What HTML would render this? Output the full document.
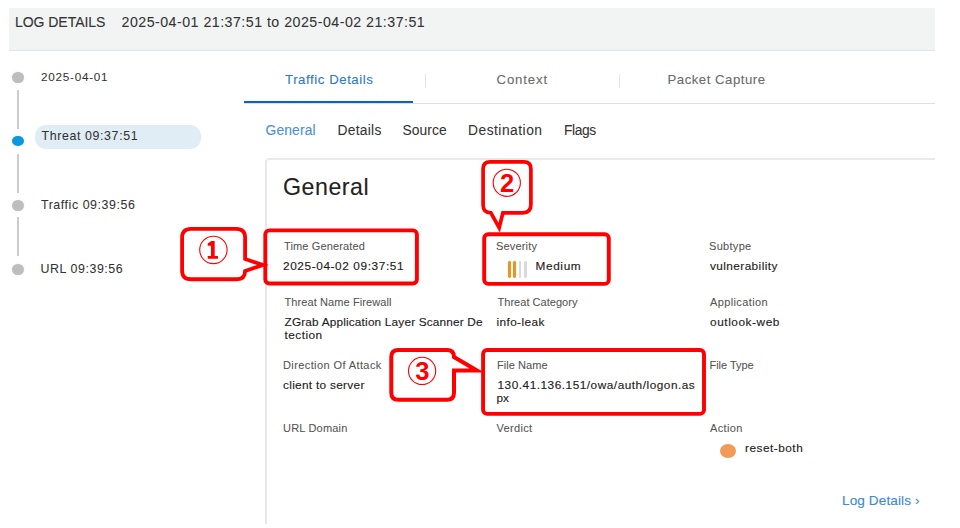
<!DOCTYPE html>
<html><head><meta charset="utf-8">
<style>
html,body{margin:0;padding:0;background:#fff;width:960px;height:528px;overflow:hidden;position:relative;font-family:"Liberation Sans",sans-serif;}
.t{position:absolute;white-space:pre;line-height:normal;}
.a{position:absolute;}
</style></head><body>
<!-- header -->
<div class="a" style="left:9px;top:8px;width:926px;height:42px;background:#f2f4f4;border-bottom:1px solid #e2e4e7;"></div>
<!-- timeline -->
<div class="a" style="left:12.1px;top:71.8px;width:11.7px;height:11.7px;border-radius:50%;background:#bdbdbd;box-shadow:0 0 3px rgba(0,0,0,0.08);"></div>
<div class="a" style="left:17px;top:89.7px;width:2px;height:39px;background:#cccccc;"></div>
<div class="a" style="left:12px;top:135.5px;width:12px;height:10.6px;border-radius:50%;background:#0b98dc;box-shadow:0 0 3px rgba(0,0,0,0.08);"></div>
<div class="a" style="left:35px;top:125px;width:166px;height:24.2px;border-radius:11px;background:#e0edf5;"></div>
<div class="a" style="left:17px;top:154px;width:2px;height:38.6px;background:#cccccc;"></div>
<div class="a" style="left:12.2px;top:199.8px;width:11.6px;height:11px;border-radius:50%;background:#bdbdbd;box-shadow:0 0 3px rgba(0,0,0,0.08);"></div>
<div class="a" style="left:17px;top:217.2px;width:2px;height:38.5px;background:#cccccc;"></div>
<div class="a" style="left:12.1px;top:263.9px;width:11.65px;height:11.1px;border-radius:50%;background:#bdbdbd;box-shadow:0 0 3px rgba(0,0,0,0.08);"></div>
<!-- tabs -->
<div class="a" style="left:244px;top:102.5px;width:691px;height:1.5px;background:#e0e0e0;"></div>
<div class="a" style="left:244px;top:100.9px;width:169px;height:2.4px;background:#0564c8;"></div>
<div class="a" style="left:425px;top:74px;width:1px;height:14px;background:#e6e6e6;"></div>
<div class="a" style="left:619px;top:74px;width:1px;height:14px;background:#e6e6e6;"></div>
<!-- card -->
<div class="a" style="left:265px;top:158px;width:668px;height:364px;border-top:2px solid #eaeaea;border-left:2px solid #e8e8e8;border-top-left-radius:4px;"></div>
<!-- severity bars -->
<div class="a" style="left:508px;top:261.2px;width:2.8px;height:16.4px;border-radius:1.4px;background:#f0921e;"></div>
<div class="a" style="left:513.1px;top:261.2px;width:2.8px;height:16.4px;border-radius:1.4px;background:#f0921e;"></div>
<div class="a" style="left:518.6px;top:261.2px;width:2.8px;height:16.4px;border-radius:1.4px;background:#dadada;"></div>
<div class="a" style="left:523.9px;top:261.2px;width:2.8px;height:16.4px;border-radius:1.4px;background:#dadada;"></div>
<!-- action dot -->
<div class="a" style="left:719.9px;top:443.7px;width:16.3px;height:14.1px;border-radius:50%;background:#f29a56;"></div>
<!-- annotations -->
<svg class="a" style="left:0;top:0" width="960" height="528" viewBox="0 0 960 528">
<g fill="none" stroke="#ff0000" stroke-width="4" stroke-linejoin="miter" stroke-miterlimit="10">
<rect x="265.3" y="230.35" width="151.6" height="53.15" rx="4" stroke-width="3.9"/>
<rect x="484.2" y="234.2" width="124.6" height="49.7" rx="4" stroke-width="3.9"/>
<rect x="483.1" y="349.95" width="220.9" height="63.95" rx="4" stroke-width="3.9"/>
<path d="M191 228.9 H236.3 Q245.1 228.9 245.1 237.7 V259 L263 265 L245.1 271 Q245.1 279.25 236.8 279.25 H190.9 Q182.1 279.25 182.1 270.45 V237.7 Q182.1 228.9 190.9 228.9 Z" stroke-width="3.8"/>
<path d="M490.1 161.9 H523.9 Q530.9 161.9 530.9 168.9 V204.8 Q530.9 212.8 522.9 212.8 H502.9 L499.2 227.8 L490.9 212.8 Q483.1 212.8 483.1 205 V168.9 Q483.1 161.9 490.1 161.9 Z" stroke-width="3.7"/>
<path d="M398.3 350.1 H447 Q454 350.1 454 357 L477 370.6 L454 370.6 V392.7 Q454 399.7 447 399.7 H398.3 Q391.3 399.7 391.3 392.7 V357.1 Q391.3 350.1 398.3 350.1 Z"/>
</g>
<g fill="none" stroke="#ff0000" stroke-width="1.1">
<circle cx="213.4" cy="249.9" r="13.7"/>
<circle cx="506.8" cy="182.8" r="13.6"/>
<circle cx="422.1" cy="370.9" r="13.6"/>
</g>
<g fill="#ff0000" font-weight="bold">
<path d="M207.7 243.4 L211.3 241 H214.7 V256.1 H218 V258.8 H207.7 V256.1 H211 V245.7 H207.7 Z" stroke="none"/>
<text x="507" y="192" font-family="Liberation Sans" font-size="25.5" text-anchor="middle">2</text>
<text x="422.3" y="380.1" font-family="Liberation Sans" font-size="25.5" text-anchor="middle">3</text>
</g>
</svg>

<div class="t" id="t0" style="left:15.00px;top:13.60px;font-size:14.0px;letter-spacing:-0.040px;color:#333;-webkit-text-stroke:0.12px #333">LOG DETAILS</div>
<div class="t" id="t1" style="left:121.50px;top:13.80px;font-size:14.2px;letter-spacing:0.488px;color:#333;-webkit-text-stroke:0.06px #333">2025-04-01 21:37:51 to 2025-04-02 21:37:51</div>
<div class="t" id="t2" style="left:41.00px;top:70.30px;font-size:11.7px;letter-spacing:0.756px;color:#333;-webkit-text-stroke:0.06px #333">2025-04-01</div>
<div class="t" id="t3" style="left:41.50px;top:129.00px;font-size:12.4px;letter-spacing:0.614px;color:#333;-webkit-text-stroke:0.06px #333">Threat 09:37:51</div>
<div class="t" id="t4" style="left:41.00px;top:197.90px;font-size:12.4px;letter-spacing:0.560px;color:#333;-webkit-text-stroke:0.06px #333">Traffic 09:39:56</div>
<div class="t" id="t5" style="left:40.50px;top:261.70px;font-size:12.4px;letter-spacing:0.564px;color:#333;-webkit-text-stroke:0.06px #333">URL 09:39:56</div>
<div class="t" id="t6" style="left:285.00px;top:71.90px;font-size:13.2px;letter-spacing:0.571px;color:#2a7bc4;-webkit-text-stroke:0.1px #2a7bc4">Traffic Details</div>
<div class="t" id="t7" style="left:496.50px;top:71.90px;font-size:13.2px;letter-spacing:0.867px;color:#6b6b6b;-webkit-text-stroke:0.1px #6b6b6b">Context</div>
<div class="t" id="t8" style="left:667.50px;top:72.00px;font-size:13.2px;letter-spacing:0.508px;color:#6b6b6b;-webkit-text-stroke:0.1px #6b6b6b">Packet Capture</div>
<div class="t" id="t9" style="left:265.50px;top:122.50px;font-size:13.8px;letter-spacing:0.167px;color:#4a90d6;-webkit-text-stroke:0.1px #4a90d6">General</div>
<div class="t" id="t10" style="left:337.50px;top:122.50px;font-size:13.8px;letter-spacing:0.267px;color:#333;-webkit-text-stroke:0.06px #333">Details</div>
<div class="t" id="t11" style="left:402.50px;top:122.50px;font-size:13.8px;letter-spacing:0.080px;color:#333;-webkit-text-stroke:0.06px #333">Source</div>
<div class="t" id="t12" style="left:468.00px;top:122.50px;font-size:13.8px;letter-spacing:0.500px;color:#333;-webkit-text-stroke:0.06px #333">Destination</div>
<div class="t" id="t13" style="left:564.00px;top:122.50px;font-size:13.8px;letter-spacing:-0.400px;color:#333;-webkit-text-stroke:0.06px #333">Flags</div>
<div class="t" id="t14" style="left:283.00px;top:174.00px;font-size:23.2px;letter-spacing:0.533px;color:#222;-webkit-text-stroke:0.1px #222">General</div>
<div class="t" id="t15" style="left:284.00px;top:239.90px;font-size:11.0px;letter-spacing:0.138px;color:#555;-webkit-text-stroke:0.08px #555">Time Generated</div>
<div class="t" id="t16" style="left:496.00px;top:239.80px;font-size:11.0px;letter-spacing:0.171px;color:#555;-webkit-text-stroke:0.08px #555">Severity</div>
<div class="t" id="t17" style="left:709.00px;top:240.00px;font-size:11.0px;letter-spacing:0.300px;color:#555;-webkit-text-stroke:0.08px #555">Subtype</div>
<div class="t" id="t18" style="left:284.50px;top:295.60px;font-size:11.0px;letter-spacing:0.095px;color:#555;-webkit-text-stroke:0.08px #555">Threat Name Firewall</div>
<div class="t" id="t19" style="left:497.50px;top:295.70px;font-size:11.0px;letter-spacing:0.029px;color:#555;-webkit-text-stroke:0.08px #555">Threat Category</div>
<div class="t" id="t20" style="left:710.00px;top:295.70px;font-size:11.0px;letter-spacing:0.380px;color:#555;-webkit-text-stroke:0.08px #555">Application</div>
<div class="t" id="t21" style="left:283.00px;top:359.20px;font-size:11.0px;letter-spacing:0.400px;color:#555;-webkit-text-stroke:0.08px #555">Direction Of Attack</div>
<div class="t" id="t22" style="left:497.00px;top:359.10px;font-size:11.0px;letter-spacing:0.050px;color:#555;-webkit-text-stroke:0.08px #555">File Name</div>
<div class="t" id="t23" style="left:709.50px;top:358.80px;font-size:11.0px;letter-spacing:-0.025px;color:#555;-webkit-text-stroke:0.08px #555">File Type</div>
<div class="t" id="t24" style="left:283.00px;top:422.30px;font-size:11.0px;letter-spacing:0.200px;color:#555;-webkit-text-stroke:0.08px #555">URL Domain</div>
<div class="t" id="t25" style="left:496.50px;top:422.20px;font-size:11.0px;letter-spacing:0.333px;color:#555;-webkit-text-stroke:0.08px #555">Verdict</div>
<div class="t" id="t26" style="left:710.00px;top:422.10px;font-size:11.0px;letter-spacing:0.360px;color:#555;-webkit-text-stroke:0.08px #555">Action</div>
<div class="t" id="t27" style="left:283.00px;top:258.80px;font-size:11.8px;letter-spacing:0.611px;color:#1e1e1e;-webkit-text-stroke:0.15px #1e1e1e">2025-04-02 09:37:51</div>
<div class="t" id="t28" style="left:535.50px;top:258.70px;font-size:11.8px;letter-spacing:0.640px;color:#1e1e1e;-webkit-text-stroke:0.15px #1e1e1e">Medium</div>
<div class="t" id="t29" style="left:710.00px;top:258.80px;font-size:11.8px;letter-spacing:0.417px;color:#1e1e1e;-webkit-text-stroke:0.15px #1e1e1e">vulnerability</div>
<div class="t" id="t30" style="left:284.50px;top:314.90px;font-size:11.8px;letter-spacing:0.182px;color:#1e1e1e;-webkit-text-stroke:0.15px #1e1e1e">ZGrab Application Layer Scanner De</div>
<div class="t" id="t31" style="left:284.50px;top:327.60px;font-size:11.8px;letter-spacing:0.467px;color:#1e1e1e;-webkit-text-stroke:0.15px #1e1e1e">tection</div>
<div class="t" id="t32" style="left:496.50px;top:314.50px;font-size:11.8px;letter-spacing:0.400px;color:#1e1e1e;-webkit-text-stroke:0.15px #1e1e1e">info-leak</div>
<div class="t" id="t33" style="left:710.00px;top:314.50px;font-size:11.8px;letter-spacing:0.580px;color:#1e1e1e;-webkit-text-stroke:0.15px #1e1e1e">outlook-web</div>
<div class="t" id="t34" style="left:283.00px;top:378.00px;font-size:11.8px;letter-spacing:0.307px;color:#1e1e1e;-webkit-text-stroke:0.15px #1e1e1e">client to server</div>
<div class="t" id="t35" style="left:497.50px;top:377.80px;font-size:11.8px;letter-spacing:0.523px;color:#1e1e1e;-webkit-text-stroke:0.15px #1e1e1e">130.41.136.151/owa/auth/logon.as</div>
<div class="t" id="t36" style="left:496.50px;top:390.90px;font-size:11.8px;letter-spacing:0.000px;color:#1e1e1e;-webkit-text-stroke:0.15px #1e1e1e">px</div>
<div class="t" id="t37" style="left:745.00px;top:440.50px;font-size:11.8px;letter-spacing:0.511px;color:#1e1e1e;-webkit-text-stroke:0.15px #1e1e1e">reset-both</div>
<div class="t" id="t38" style="left:842.00px;top:492.60px;font-size:13.6px;letter-spacing:0.100px;color:#3c8ad0;-webkit-text-stroke:0.12px #3c8ad0">Log Details ›</div>
</body></html>
